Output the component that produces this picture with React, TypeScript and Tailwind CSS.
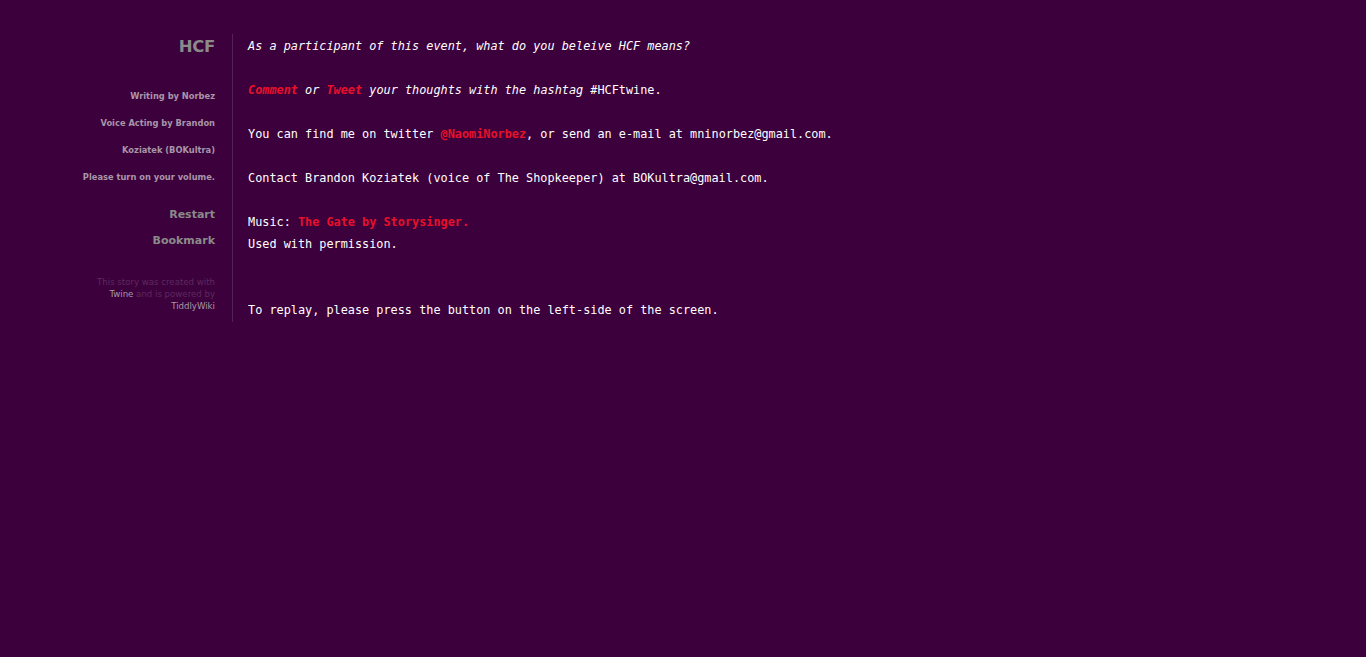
import React from "react";

export default function App() {
  const mono = { fontFamily: '"DejaVu Sans Mono", "Liberation Mono", monospace' };
  return (
    <div className="min-h-[657px] w-full bg-[#3c003c]">
      <div className="flex pt-[34px]">
        <div
          className="w-[233px] shrink-0 border-r border-[#552055] pr-[17px] text-right pb-[10px]"
          style={{ fontFamily: '"DejaVu Sans", Verdana, sans-serif' }}
        >
          <div className="text-[16.5px] font-bold leading-[26px] text-[#8a8a8a] tracking-[-0.3px]">HCF</div>
          <div className="mt-[23px] text-[8.3px] font-bold text-[#a896a8]">
            <div className="leading-[27px]">Writing by Norbez</div>
            <div className="leading-[27px]">Voice Acting by Brandon</div>
            <div className="leading-[27px]">Koziatek (BOKultra)</div>
            <div className="leading-[27px]">Please turn on your volume.</div>
          </div>
          <div className="mt-[11px] text-[11px] font-bold text-[#8a8a8a]">
            <div className="leading-[26px]">Restart</div>
            <div className="leading-[26px]">Bookmark</div>
          </div>
          <div className="mt-[22px] text-[8.6px] leading-[12px] text-[#5e2a5e]">
            <div>This story was created with</div>
            <div>
              <span className="text-[#a59aa5]">Twine</span> and is powered by
            </div>
            <div className="text-[#a59aa5]">TiddlyWiki</div>
          </div>
        </div>
        <div className="pl-[15px] pt-[1px] text-[11.85px] leading-[22px] text-white" style={mono}>
          <div className="italic">As a participant of this event, what do you beleive HCF means?</div>
          <div className="h-[22px]" />
          <div className="italic">
            <span className="font-bold text-[#e8102a]">Comment</span> or{" "}
            <span className="font-bold text-[#e8102a]">Tweet</span> your thoughts with the hashtag{" "}
            <span className="not-italic">#HCFtwine.</span>
          </div>
          <div className="h-[22px]" />
          <div>
            You can find me on twitter <span className="font-bold text-[#e8102a]">@NaomiNorbez</span>, or send an
            e-mail at mninorbez@gmail.com.
          </div>
          <div className="h-[22px]" />
          <div>Contact Brandon Koziatek (voice of The Shopkeeper) at BOKultra@gmail.com.</div>
          <div className="h-[22px]" />
          <div>
            Music: <span className="font-bold text-[#e8102a]">The Gate by Storysinger.</span>
          </div>
          <div>Used with permission.</div>
          <div className="h-[44px]" />
          <div>To replay, please press the button on the left-side of the screen.</div>
        </div>
      </div>
    </div>
  );
}
